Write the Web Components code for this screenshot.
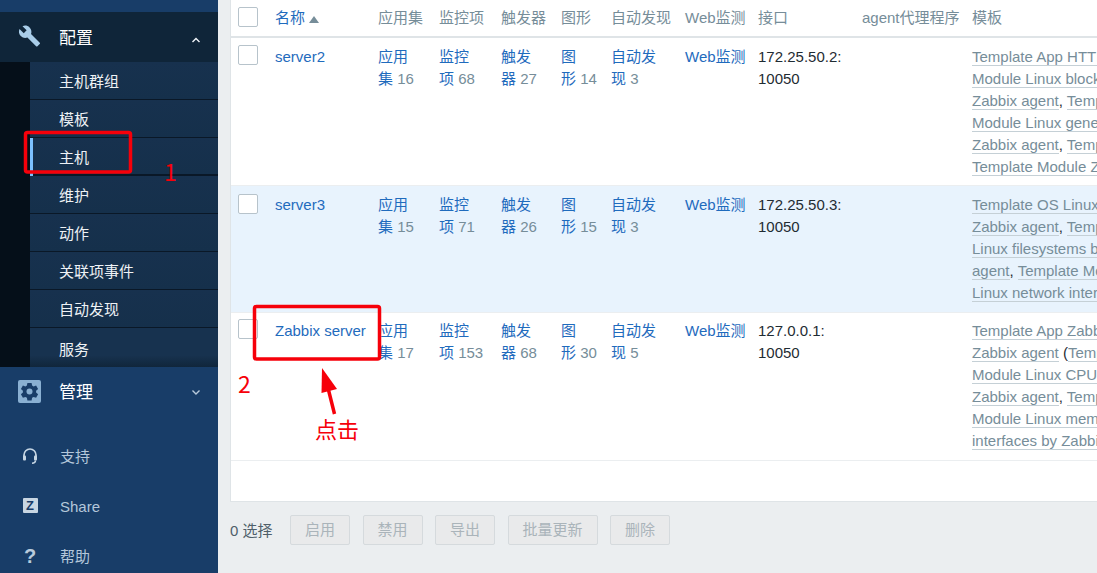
<!DOCTYPE html>
<html lang="zh"><head><meta charset="utf-8"><title>Hosts</title>
<style>
html,body{margin:0;padding:0;height:573px;overflow:hidden;background:#ebeef0}
body{font:15px/22px "Liberation Sans","Noto Sans CJK SC",sans-serif;color:#1f2c33;display:flex;position:relative}
</style></head><body>
<zbx-sidebar>
  <zbx-nav-head open label="配置"><svg slot="icon" width="24" height="24" viewBox="0 0 24 24"><path fill="#a9cde9" d="M22.7 19l-9.1-9.1c.9-2.3.4-5-1.5-6.9-2-2-5-2.4-7.4-1.3L9 6 6 9 1.6 4.7C.4 7.1.9 10.1 2.9 12.1c1.9 1.9 4.6 2.4 6.9 1.5l9.1 9.1c.4.4 1 .4 1.4 0l2.3-2.3c.5-.4.5-1.1.1-1.4z"/></svg></zbx-nav-head>
  <zbx-submenu>
    <zbx-subitem>主机群组</zbx-subitem>
    <zbx-subitem>模板</zbx-subitem>
    <zbx-subitem active>主机</zbx-subitem>
    <zbx-subitem>维护</zbx-subitem>
    <zbx-subitem>动作</zbx-subitem>
    <zbx-subitem>关联项事件</zbx-subitem>
    <zbx-subitem>自动发现</zbx-subitem>
    <zbx-subitem last>服务</zbx-subitem>
  </zbx-submenu>
  <zbx-nav-head label="管理"><svg slot="icon" width="23" height="23" viewBox="0 0 23 23"><rect width="23" height="23" rx="2" fill="#8ab0d2"/><path fill="#193d68" d="M9.4 3h4.2l.5 2.6 1.5.8 2.5-.9 2 3.6-2 1.7v1.8l2 1.7-2 3.5-2.5-.9-1.5.9-.5 2.6H9.4l-.5-2.6-1.5-.9-2.5.9-2-3.5 2-1.7v-1.8l-2-1.7 2-3.6 2.5.9 1.5-.8z"/><circle cx="11.5" cy="11.5" r="3" fill="#8ab0d2"/></svg></zbx-nav-head>
  <zbx-bottom-nav>
    <zbx-bottom-item label="支持"><svg width="18" height="18" viewBox="0 0 18 18" fill="none" stroke="#c6d6e4"><path stroke-width="1.7" d="M3 11V8a6 6 0 0 1 12 0v3"/><rect x="2" y="8.5" width="3" height="5" rx="1" fill="#c6d6e4" stroke="none"/><rect x="13" y="8.5" width="3" height="5" rx="1" fill="#c6d6e4" stroke="none"/><path stroke-width="1.5" d="M14.5 13.5q0 2.7-3.5 2.7"/></svg></zbx-bottom-item>
    <zbx-bottom-item label="Share"><zbx-zmark>Z</zbx-zmark></zbx-bottom-item>
    <zbx-bottom-item label="帮助"><zbx-qmark>?</zbx-qmark></zbx-bottom-item>
  </zbx-bottom-nav>
</zbx-sidebar>
<zbx-main>
  <zbx-table>
    <zbx-head></zbx-head>
    <zbx-row name="server2" apps="16" items="68" trig="27" graphs="14" disc="3" ip="172.25.50.2:" pt="8" pb="7">
      <t-l>Template App HTTP Service</t-l><br><t-l>Module Linux block devices by</t-l><br><t-l>Zabbix agent</t-l>, <t-l>Template</t-l><br><t-l>Module Linux generic by</t-l><br><t-l>Zabbix agent</t-l>, <t-l>Template</t-l><br><t-l>Template Module Zabbix agent</t-l>
    </zbx-row>
    <zbx-row name="server3" apps="15" items="71" trig="26" graphs="15" disc="3" ip="172.25.50.3:" pt="8" pb="8" hl cb="8">
      <t-l>Template OS Linux by</t-l><br><t-l>Zabbix agent</t-l>, <t-l>Template Module</t-l><br><t-l>Linux filesystems by Zabbix</t-l><br><t-l>agent</t-l>, <t-l>Template Module</t-l><br><t-l>Linux network interfaces</t-l>
    </zbx-row>
    <zbx-row name="Zabbix server" apps="17" items="153" trig="68" graphs="30" disc="5" ip="127.0.0.1:" pt="7" pb="8">
      <t-l>Template App Zabbix Server</t-l><br><t-l>Zabbix agent</t-l> (<t-l>Template</t-l><br><t-l>Module Linux CPU by</t-l><br><t-l>Zabbix agent</t-l>, <t-l>Template</t-l><br><t-l>Module Linux memory by</t-l><br><t-l>interfaces by Zabbix agent</t-l>
    </zbx-row>
  </zbx-table>
  <zbx-actions>
    <zbx-btn>启用</zbx-btn><zbx-btn>禁用</zbx-btn><zbx-btn>导出</zbx-btn><zbx-btn>批量更新</zbx-btn><zbx-btn>删除</zbx-btn>
  </zbx-actions>
</zbx-main>
<zbx-annotations></zbx-annotations>
<script>
function def(name, css, html){
  customElements.define(name, class extends HTMLElement{
    constructor(){super();const s=this.attachShadow({mode:'open'});s.innerHTML='<style>'+css+'</style>'+(typeof html==='function'?'':html);this._h=html;}
    connectedCallback(){ if(typeof this._h==='function'&&!this._d){this._d=1;this.shadowRoot.innerHTML+=this._h(this);} }
  });
}
def('zbx-sidebar',':host{display:block;flex:none;width:218px;height:573px;overflow:hidden;background:#183d68;padding-top:12px;box-sizing:border-box}','<slot></slot>');
def('zbx-nav-head',`:host{display:flex;align-items:center;height:50px;color:#fff;font-size:17px;padding-left:18px;box-sizing:border-box;position:relative}
:host([open]){background:#0f2539;padding-top:3px}
:host(:not([open])){padding-top:1px}
.i{width:23px;height:24px;display:flex;margin-right:18px}
:host([open]) .i{margin-top:-5px}
:host(:not([open])) .i{margin-top:-2px}
.c{position:absolute;left:191px;top:50%;margin-top:-3px}
:host([open]) .c{margin-top:0}`,
 h=>`<span class="i"><slot name="icon"></slot></span><span>${h.getAttribute('label')}</span>
 <svg class="c" width="10" height="6" viewBox="0 0 10 6" fill="none" stroke="${h.hasAttribute('open')?'#f0f4f8':'#b8cadb'}" stroke-width="1.4"><path d="${h.hasAttribute('open')?'M1.5 5L5 1.5 8.5 5':'M1.5 1.5L5 5 8.5 1.5'}"/></svg>`);
def('zbx-submenu',':host{display:block;padding-left:30px;background:#050f19;height:305px;overflow:hidden}','<slot></slot>');
def('zbx-subitem',`:host{display:flex;align-items:center;height:38px;padding:3px 0 0 29px;box-sizing:border-box;background:linear-gradient(#17314e,#15304b);color:#eef2f5;font-size:15px;border-bottom:1px solid #0a1827;position:relative}
:host([last]){height:39px;border-bottom:0;background:linear-gradient(#17324f 70%,#10263b);padding-top:5px}
:host([active]){border-bottom:2px solid #0a1827}
:host([active]) .b{position:absolute;left:0;top:0;bottom:-2px;width:3px;background:#7cc1ff}`,'<span class="b"></span><slot></slot>');
def('zbx-bottom-nav',':host{display:block;padding-top:15px}','<slot></slot>');
def('zbx-bottom-item',`:host{display:flex;align-items:center;height:50px;color:#b4c7da;font-size:15px}
.i{width:60px;height:50px;display:flex;align-items:center;justify-content:center;flex:none;box-sizing:border-box;padding-bottom:3px}`,
 h=>`<span class="i"><slot></slot></span><span>${h.getAttribute('label')}</span>`);
def('zbx-zmark',':host{display:flex;width:15px;height:15px;background:#c8d6e2;border-radius:1px;color:#193d68;font:bold 13px/15px "Liberation Sans",sans-serif;justify-content:center}','<slot></slot>');
def('zbx-qmark',':host{display:block;color:#b9cbdc;font:bold 20px/20px "Liberation Sans",sans-serif}','<slot></slot>');
def('zbx-main',':host{display:block;flex:1;min-width:0;height:573px;overflow:hidden}','<slot></slot>');
def('zbx-table',':host{display:block;margin-left:12px;height:502px;box-sizing:border-box;background:#fff;border-left:1px solid #dfe4e7;border-bottom:1px solid #dfe4e7;overflow:hidden}','<slot></slot>');
const grid='display:grid;grid-template-columns:37px 103px 61px 62px 60px 50px 74px 73px 104px 110px 400px;width:1134px;';
const cellCss='.c{padding:0 7px;white-space:nowrap;min-width:0}a,.a{color:#1f6bbd;text-decoration:none}.n{color:#768d99}';
const box=(t)=>`<span style="display:block;margin-left:7px;margin-top:${t}px;width:18px;height:18px;border:1px solid #b7c3cb;border-radius:2px;background:#fff"></span>`;
def('zbx-head',`:host{${grid}height:38px;border-bottom:2px solid #dfe4e7;box-sizing:border-box;color:#768d99;line-height:36px;align-items:start}${cellCss}
.tri{display:inline-block;width:0;height:0;border:5px solid transparent;border-top:0;border-bottom:7px solid #768d99;margin-left:4px;vertical-align:0}`,
 ()=>`<div>${box(7)}</div><div class="c"><span class="a">名称</span><span class="tri"></span></div>`+['应用集','监控项','触发器','图形','自动发现','Web监测','接口','agent代理程序','模板'].map(x=>`<div class="c">${x}</div>`).join(''));
def('zbx-row',`:host{${grid}box-sizing:border-box;border-bottom:1px solid #ebeef0;background:#fff}
:host([hl]){background:#e8f3fd}${cellCss}`,
 h=>{const g=k=>h.getAttribute(k);const cnt=(a,b,k)=>`<div class="c"><span class="a">${a}</span><br><span class="a">${b}</span> <span class="n">${g(k)}</span></div>`;
 h.style.paddingTop=g('pt')+'px';h.style.paddingBottom=g('pb')+'px';
 return `<div>${box(g('cb')?0:-1)}</div><div class="c"><span class="a">${g('name')}</span></div>`+cnt('应用','集','apps')+cnt('监控','项','items')+cnt('触发','器','trig')+cnt('图','形','graphs')+cnt('自动发','现','disc')+
 `<div class="c"><span class="a">Web监测</span></div><div class="c">${g('ip')}<br>10050</div><div class="c"></div><div class="c"><slot></slot></div>`});
def('t-l',':host{display:inline;color:#768d99;border-bottom:1px solid #c5d0d6}','<slot></slot>');
def('zbx-actions',':host{display:flex;align-items:flex-start;height:71px;padding:13px 0 0 12px;box-sizing:border-box;color:#4f5f6a;gap:12.5px}.l{margin-right:5px;line-height:30px;padding-top:1px}','<span class="l">0 选择</span><slot></slot>');
def('zbx-btn',':host{display:block;box-sizing:border-box;height:30px;line-height:28px;padding:0 14px;border:1px solid #d5dadd;border-radius:2px;background:#e9eaeb;color:#aab4ba}','<slot></slot>');
def('zbx-annotations',`:host{position:absolute;left:0;top:0;width:1097px;height:573px;pointer-events:none}
svg{position:absolute;left:0;top:0}
span{position:absolute;color:#f6000a;font-family:"Noto Sans CJK SC",sans-serif}`,
`<svg width="1097" height="573" fill="none"><rect x="25.5" y="132.5" width="105" height="39.5" rx="2" stroke="#f6000a" stroke-width="3.5"/><rect x="254.5" y="306.5" width="125" height="52.5" rx="2" stroke="#f6000a" stroke-width="3.5"/><path d="M334.5 414L328 388" stroke="#f6000a" stroke-width="3.5"/><path fill="#f6000a" d="M322 368L337 389 321.5 393z"/></svg>
<span style="left:164px;top:156px;font-size:23px;line-height:30px">1</span><span style="left:238px;top:368px;font-size:23px;line-height:30px">2</span><span style="left:315px;top:413px;font-size:22px;line-height:30px">点击</span>`);
</script>
</body></html>
